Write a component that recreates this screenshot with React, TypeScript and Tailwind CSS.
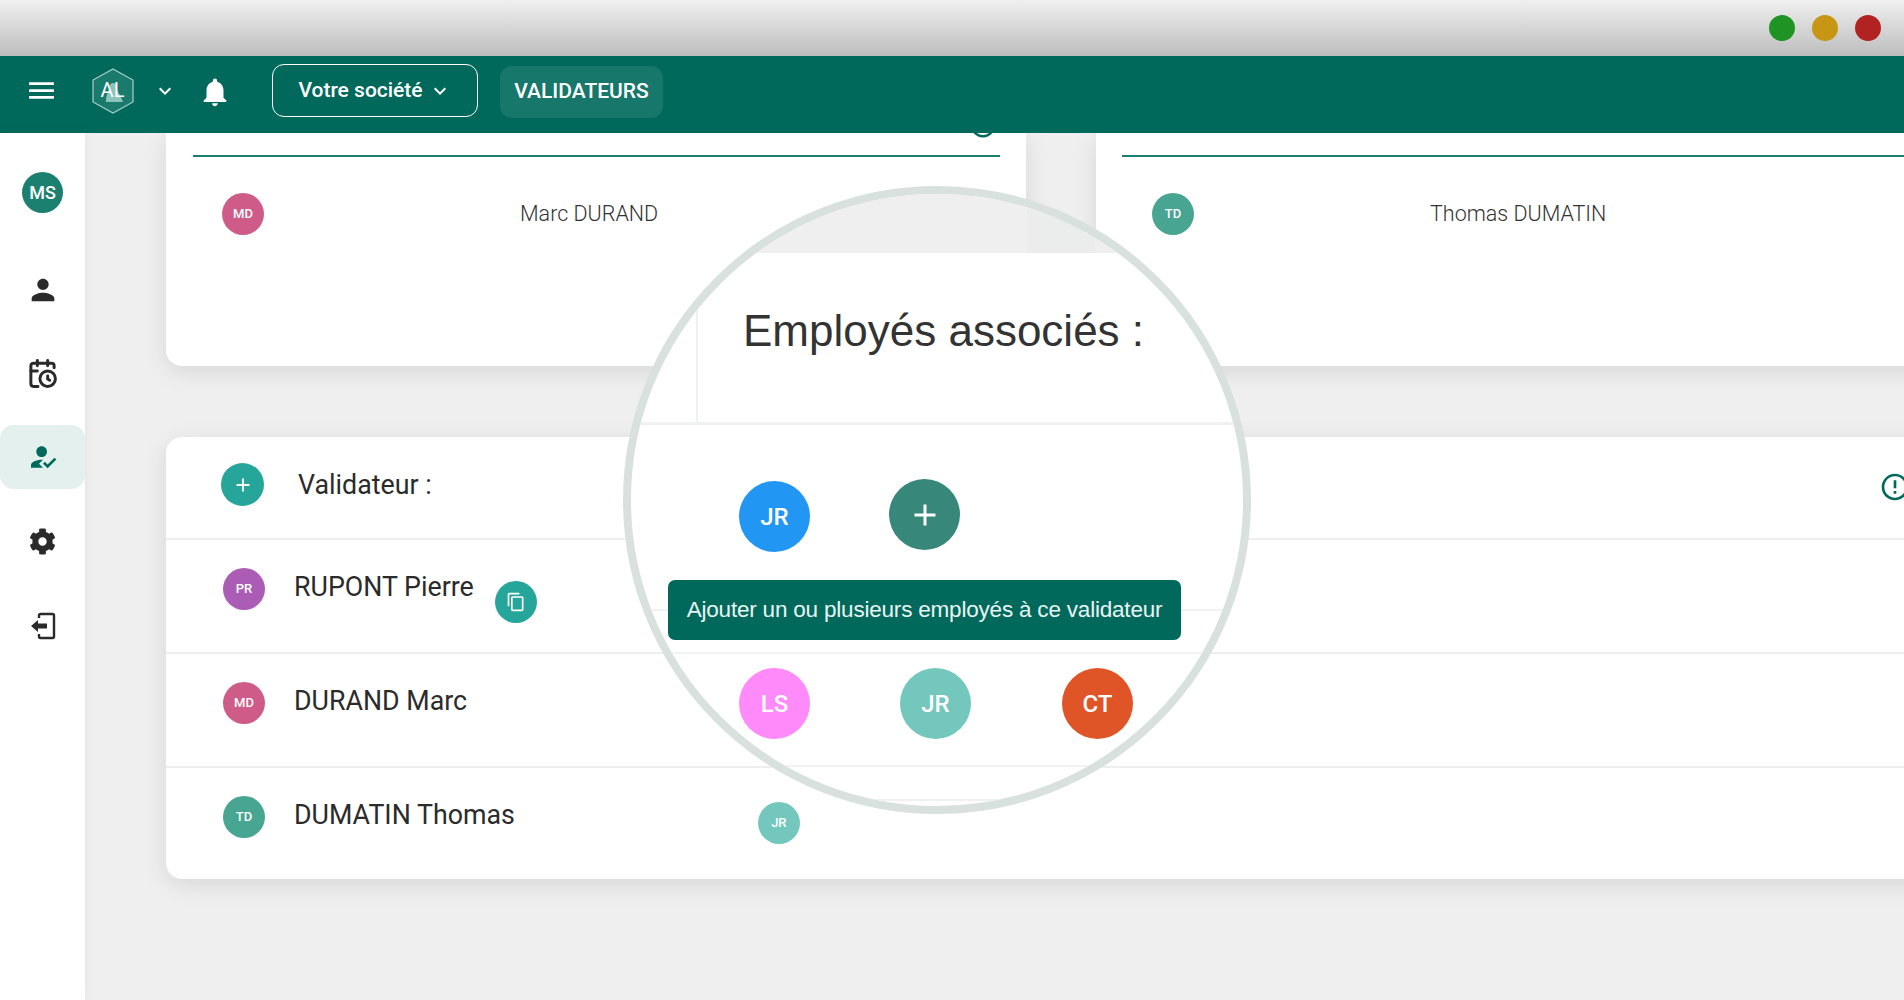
import { CalendarClock } from "lucide-react";
import { FaCog } from "react-icons/fa";
import {
  MdAdd,
  MdContentCopy,
  MdErrorOutline,
  MdHowToReg,
  MdKeyboardArrowDown,
  MdMenu,
  MdNotifications,
  MdPerson,
} from "react-icons/md";

const FONT = "font-['Roboto','Liberation_Sans',sans-serif]";

function Avatar({ label, color, className = "" }: { label: string; color: string; className?: string }) {
  return (
    <div className={`flex shrink-0 items-center justify-center rounded-full font-medium text-white ${color} ${className}`}>
      {label}
    </div>
  );
}

function Logo() {
  return (
    <svg width="42" height="46" viewBox="0 0 42 46" className="shrink-0">
      <polygon points="21,1 41,12 41,34 21,45 1,34 1,12" fill="#1a7a6c" stroke="#a8cfc9" strokeWidth="1.2" />
      <path d="M14 34 C14 27 16 25 17 21 C17 13 25 13 25 21 C26 25 29 28 31 34 Z" fill="#8cc4bc" />
      <text x="20.5" y="29" textAnchor="middle" fill="#ffffff" fontSize="20" fontFamily="Roboto, sans-serif">
        AL
      </text>
    </svg>
  );
}

function LogoutIcon() {
  return (
    <svg width="26" height="28" viewBox="0 0 26 28" fill="none" className="text-[#2a2a2a]">
      <path d="M9 6V3.5C9 2.7 9.7 2 10.5 2H22.5C23.3 2 24 2.7 24 3.5V24.5C24 25.3 23.3 26 22.5 26H10.5C9.7 26 9 25.3 9 24.5V22" stroke="currentColor" strokeWidth="2.4" />
      <path d="M1 14L8 8V11.5H17V16.5H8V20Z" fill="currentColor" />
    </svg>
  );
}

function Sidebar() {
  return (
    <aside className="z-10 flex w-[85px] shrink-0 flex-col items-center bg-white shadow-[0_0_12px_rgba(0,0,0,0.05)]">
      <Avatar label="MS" color="bg-[#1b8070]" className="mt-[39px] h-[41px] w-[41px] text-[18px]" />
      <div className="mt-[60px] flex h-[34px] items-center justify-center">
        <MdPerson size={34} className="text-[#2a2a2a]" />
      </div>
      <div className="mt-[49px] flex h-[34px] items-center justify-center">
        <CalendarClock size={31} strokeWidth={2.3} className="text-[#2a2a2a]" />
      </div>
      <div className="mt-[35px] flex h-[64px] w-[85px] items-center justify-center rounded-[14px] bg-[#e3f0ed]">
        <MdHowToReg size={32} className="text-[#00695c]" />
      </div>
      <div className="mt-[38px] flex h-[28px] items-center justify-center">
        <FaCog size={27} className="text-[#2a2a2a]" />
      </div>
      <div className="mt-[57px] flex h-[28px] items-center justify-center">
        <LogoutIcon />
      </div>
    </aside>
  );
}

function Row({ avatar, name, color, children }: { avatar: string; name: string; color: string; children?: React.ReactNode }) {
  return (
    <div className="flex h-[114px] items-start border-t-[2px] border-[#eeeeee] pl-[57px] pt-[28px]">
      <Avatar label={avatar} color={color} className="h-[42px] w-[42px] text-[13px]" />
      <span className="ml-[29px] mt-[-1px] text-[26.8px] leading-[40px] text-[#2b2b2b]">{name}</span>
      {children}
    </div>
  );
}

function Magnifier() {
  return (
    <div className="absolute left-[623px] top-[186px] z-20 h-[628px] w-[628px] overflow-hidden rounded-full border-[8px] border-[#d9e1df] bg-white">
      {/* zone grise du haut */}
      <div className="h-[59px] bg-[#efefef]">
        <div className="ml-[396px] h-full w-[68px] bg-[#ebecec]" />
      </div>
      <div className="h-[172px] border-b-[3px] border-[#f0f1f1] pt-[48px]">
        <div className="ml-[65px] h-[121px] border-l-[2px] border-[#f0f1f1] pl-[45px]">
          <h2 className="font-['Liberation_Sans',Arial,sans-serif] text-[44px] leading-[60px] text-[#333333]">Employés associés :</h2>
        </div>
      </div>
      <div className="flex h-[155px] items-start pl-[108px] pt-[54px]">
        <Avatar label="JR" color="bg-[#2196f3] mt-[2px]" className="h-[71px] w-[71px] text-[24px]" />
        <div className="ml-[79px] flex h-[71px] w-[71px] items-center justify-center rounded-full bg-[#37877b]">
          <MdAdd size={36} className="text-white" />
        </div>
      </div>
      <div className="relative">
        {/* ligne du tableau visible derrière l'infobulle */}
        <div className="absolute left-0 right-0 top-[29px] border-t-[2px] border-[#f0f1f1]" />
        <div className="relative ml-[37px] flex h-[60px] w-[513px] items-center justify-center rounded-[7px] bg-[#00695c]">
          <span className="whitespace-nowrap font-['Liberation_Sans',Arial,sans-serif] text-[22.5px] tracking-[-0.2px] text-[#e9f5f3]">
            Ajouter un ou plusieurs employés à ce validateur
          </span>
        </div>
      </div>
      <div className="mt-[12px] flex h-[115px] items-start border-y-[2px] border-[#f0f1f1] pl-[108px] pt-[14px]">
        <Avatar label="LS" color="bg-[#ff8bfb]" className="h-[71px] w-[71px] text-[24px]" />
        <Avatar label="JR" color="bg-[#73c7bc]" className="ml-[90px] h-[71px] w-[71px] text-[24px]" />
        <Avatar label="CT" color="bg-[#e05527]" className="ml-[91px] h-[71px] w-[71px] text-[24px]" />
      </div>
      <div className="mt-[32px] border-t-[2px] border-[#f0f1f1]" />
    </div>
  );
}

export default function App() {
  return (
    <div className={`relative flex h-[1000px] w-full flex-col overflow-hidden bg-[#efefef] ${FONT}`}>
      {/* barre de fenêtre */}
      <div className="flex h-[56px] shrink-0 items-center justify-end gap-[17px] bg-gradient-to-b from-[#f0f0f0] to-[#bdbdbd] pr-[23px]">
        <span className="h-[26px] w-[26px] rounded-full bg-[#1f9424]" />
        <span className="h-[26px] w-[26px] rounded-full bg-[#c69614]" />
        <span className="h-[26px] w-[26px] rounded-full bg-[#b32222]" />
      </div>

      {/* header */}
      <header className="z-10 flex h-[77px] shrink-0 items-center bg-[#00695c] pb-[8px] pl-[25px] text-white">
        <MdMenu size={33} />
        <div className="ml-[34px]">
          <Logo />
        </div>
        <MdKeyboardArrowDown size={24} className="ml-[19px]" />
        <MdNotifications size={34} className="ml-[21px] mt-[2px]" />
        <button className="ml-[40px] flex h-[53px] w-[206px] items-center justify-center gap-[5px] rounded-[12px] border border-white text-[21px] font-medium">
          Votre société
          <MdKeyboardArrowDown size={24} />
        </button>
        <div className="ml-[22px] mt-[3px] flex h-[52px] w-[163px] items-center justify-center rounded-[12px] bg-[#17776a] text-[21px] font-medium">
          VALIDATEURS
        </div>
      </header>

      <div className="flex min-h-0 flex-1">
        <Sidebar />
        <main className="min-w-0 flex-1 overflow-hidden pl-[81px]">
          {/* cartes du haut */}
          <div className="flex gap-[70px]">
            <section className="h-[233px] w-[860px] shrink-0 rounded-b-[16px] bg-white shadow-[0_6px_24px_rgba(0,0,0,0.1)]">
              <div className="relative ml-[27px] mt-[22px] w-[807px] border-t-[2px] border-[#1b8070]">
                <div className="absolute -top-[47px] right-[2px] text-[#00695c]">
                  <MdErrorOutline size={30} />
                </div>
              </div>
              <div className="mt-[36px] flex items-center pl-[56px]">
                <Avatar label="MD" color="bg-[#cf5c88]" className="h-[42px] w-[42px] text-[13px]" />
                <span className="ml-[256px] text-[21.5px] font-light text-[#333333]">Marc DURAND</span>
              </div>
            </section>
            <section className="h-[233px] w-[900px] shrink-0 rounded-b-[16px] bg-white shadow-[0_6px_24px_rgba(0,0,0,0.1)]">
              <div className="ml-[26px] mt-[22px] border-t-[2px] border-[#1b8070]" />
              <div className="mt-[36px] flex items-center pl-[56px]">
                <Avatar label="TD" color="bg-[#47a592]" className="h-[42px] w-[42px] text-[13px]" />
                <span className="ml-[236px] text-[21.5px] font-light text-[#333333]">Thomas DUMATIN</span>
              </div>
            </section>
          </div>

          {/* liste des validateurs */}
          <section className="mt-[71px] h-[442px] w-[1800px] rounded-[16px] bg-white shadow-[0_6px_24px_rgba(0,0,0,0.1)]">
            <div className="flex h-[101px] items-start pl-[55px] pt-[26px]">
              <div className="flex h-[43px] w-[43px] shrink-0 items-center justify-center rounded-full bg-[#26a69a]">
                <MdAdd size={22} className="text-white" />
              </div>
              <span className="ml-[34px] mt-[2px] text-[26.8px] leading-[40px] text-[#2b2b2b]">Validateur :</span>
              <MdErrorOutline size={32} className="ml-[1447px] mt-[8px] shrink-0 text-[#00695c]" />
            </div>
            <Row avatar="PR" name="RUPONT Pierre" color="bg-[#ab5db6]">
              <div className="ml-[21px] mt-[13px] flex h-[42px] w-[42px] items-center justify-center rounded-full bg-[#26a69a]">
                <MdContentCopy size={20} className="text-white" />
              </div>
            </Row>
            <Row avatar="MD" name="DURAND Marc" color="bg-[#cf5c88]" />
            <div className="flex h-[114px] items-start border-t-[2px] border-[#eeeeee] pl-[57px] pt-[28px]">
              <Avatar label="TD" color="bg-[#47a592]" className="h-[42px] w-[42px] text-[13px]" />
              <span className="ml-[29px] mt-[-1px] text-[26.8px] leading-[40px] text-[#2b2b2b]">DUMATIN Thomas</span>
              <Avatar label="JR" color="bg-[#73c7bc]" className="ml-[243px] mt-[6px] h-[42px] w-[42px] text-[13px]" />
            </div>
          </section>
        </main>
      </div>

      <Magnifier />
    </div>
  );
}
